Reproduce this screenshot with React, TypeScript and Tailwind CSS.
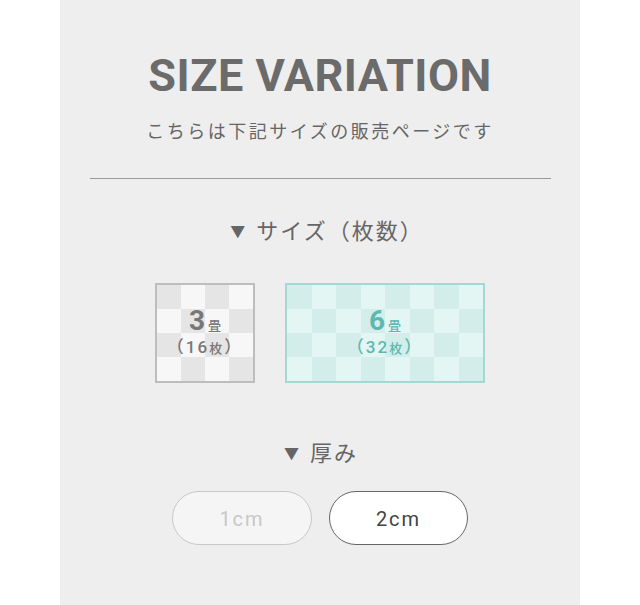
import React from "react";

const jp = "font-['Roboto','Noto_Sans_CJK_JP',sans-serif]";

function Checker({
  cols,
  dark,
  light,
  border,
  children,
}: {
  cols: number;
  dark: string;
  light: string;
  border: string;
  children: React.ReactNode;
}) {
  const cells = Array.from({ length: cols * 4 }, (_, i) => {
    const r = Math.floor(i / cols);
    const c = i % cols;
    return (r + c) % 2 === 0 ? dark : light;
  });
  return (
    <div
      className={`grid h-[100px] border-2 ${border} ${cols === 4 ? "w-[100px] grid-cols-4" : "w-[200px] grid-cols-8"} grid-rows-4`}
    >
      {cells.map((bg, i) => (
        <div
          key={i}
          className={bg}
          style={{ gridRow: Math.floor(i / cols) + 1, gridColumn: (i % cols) + 1 }}
        />
      ))}
      <div className="col-[1/-1] row-[1/-1] flex flex-col items-center justify-center">
        {children}
      </div>
    </div>
  );
}

export default function App() {
  return (
    <div className="flex min-h-[605px] w-full justify-center bg-white">
      <div className={`flex w-[520px] flex-col items-center bg-[#eeeeee] pt-[51px] ${jp}`}>
        <h1 className="font-['Roboto',sans-serif] text-[45px] font-bold leading-[50px] tracking-[0.5px] text-[#6b6b6b]">
          SIZE VARIATION
        </h1>
        <p className="mt-[18px] text-[18px] leading-[26px] tracking-[2.5px] text-[#666666]">
          こちらは下記サイズの販売ページです
        </p>
        <div className="mt-[33px] h-px w-[461px] bg-[#9a9a9a]" />

        <div className="mt-[38px] flex items-center pl-[14px] text-[22px] leading-[30px] tracking-[2px] text-[#666666]">
          <span className="mr-[9px] text-[15px]">▼</span>
          サイズ（枚数）
        </div>

        <div className="mt-[36px] flex gap-[30px]">
          <Checker cols={4} dark="bg-[#e5e5e5]" light="bg-[#f7f7f7]" border="border-[#bdbdbd]">
            <div className="flex items-baseline text-[#777777]">
              <span className="text-[28px] font-bold leading-[28px]">3</span>
              <span className="ml-[3px] text-[13px] font-medium">畳</span>
            </div>
            <div className="mt-[1px] text-[17px] font-medium leading-[20px] tracking-[2px] text-[#777777]">
              （16<span className="text-[13px]">枚</span>）
            </div>
          </Checker>
          <Checker cols={8} dark="bg-[#d3eeea]" light="bg-[#e3f6f4]" border="border-[#a5d8d4]">
            <div className="flex items-baseline text-[#5cb8b1]">
              <span className="text-[28px] font-bold leading-[28px]">6</span>
              <span className="ml-[3px] text-[13px] font-medium">畳</span>
            </div>
            <div className="mt-[1px] text-[17px] font-medium leading-[20px] tracking-[2px] text-[#5cb8b1]">
              （32<span className="text-[13px]">枚</span>）
            </div>
          </Checker>
        </div>

        <div className="mt-[56px] flex items-center pl-[2px] text-[22px] leading-[30px] tracking-[2px] text-[#666666]">
          <span className="mr-[9px] text-[15px]">▼</span>
          厚み
        </div>

        <div className="mt-[22px] flex gap-[17px] pb-[60px]">
          <div className="flex h-[54px] w-[140px] items-center justify-center rounded-full border border-[#c8c8c8] bg-[#f5f5f5] pt-[2px] text-[20px] tracking-[2px] text-[#c8c8c8]">
            1cm
          </div>
          <div className="flex h-[54px] w-[139px] items-center justify-center rounded-full border border-[#666666] bg-white pt-[2px] text-[20px] tracking-[2px] text-[#444444]">
            2cm
          </div>
        </div>
      </div>
    </div>
  );
}
